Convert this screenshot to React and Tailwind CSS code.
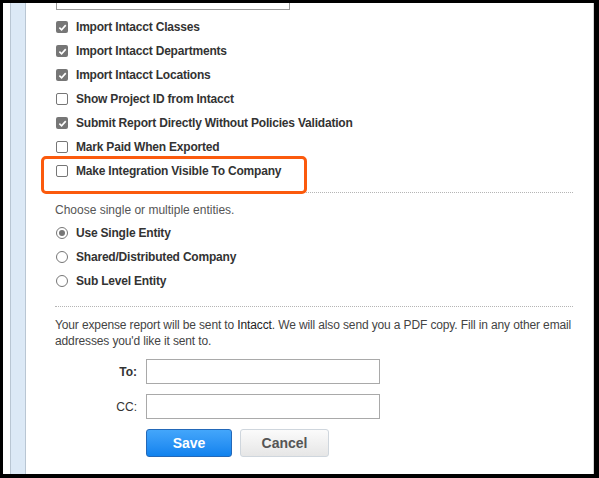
import React from 'react';

const font = { fontFamily: '"Liberation Sans", Arial, sans-serif' };

function Check({ checked }) {
  if (checked) {
    return (
      <span className="flex items-center justify-center w-[12px] h-[12px] rounded-[2px] bg-[#767676]">
        <svg width="9" height="9" viewBox="0 0 10 10">
          <path d="M1.5 5.2 L4 7.6 L8.6 2.4" fill="none" stroke="#fff" strokeWidth="1.8" />
        </svg>
      </span>
    );
  }
  return <span className="block w-[12px] h-[12px] rounded-[2px] border border-[#767676] bg-white" />;
}

function Radio({ checked }) {
  return (
    <span className="flex items-center justify-center w-[12px] h-[12px] rounded-full border border-[#767676] bg-white">
      {checked && <span className="block w-[6px] h-[6px] rounded-full bg-[#767676]" />}
    </span>
  );
}

function Row({ children, control }) {
  return (
    <div className="flex items-center h-[24px] pl-[1px]">
      <span className="w-[20px] shrink-0">{control}</span>
      <span className="text-[12px] font-bold text-[#333] tracking-[-0.2px]">{children}</span>
    </div>
  );
}

const options = [
  ['Import Intacct Classes', true],
  ['Import Intacct Departments', true],
  ['Import Intacct Locations', true],
  ['Show Project ID from Intacct', false],
  ['Submit Report Directly Without Policies Validation', true],
  ['Mark Paid When Exported', false],
];

export default function App() {
  return (
    <div
      style={font}
      className="w-[599px] h-[478px] bg-white border-black border-t-[3px] border-l-[3px] border-r-[5px] border-b-[4px] flex overflow-hidden"
    >
      {/* left rail */}
      <div className="w-[7px] shrink-0 bg-white" />
      <div className="w-[16px] shrink-0 bg-[#dce9f6] border-x border-[#b9c6d3]" />

      {/* content */}
      <div className="flex-1 pl-[29px] pr-[19px] border-r border-[#d4d4d4]">
        <div className="ml-[1px] w-[234px] h-[7px] border-x border-b border-[#9a9a9a]" />

        <div className="mt-[5px]">
          {options.map(([label, checked]) => (
            <Row key={label} control={<Check checked={checked} />}>
              {label}
            </Row>
          ))}
          <div className="relative">
            <Row control={<Check checked={false} />}>Make Integration Visible To Company</Row>
            <div className="absolute -top-[3px] -left-[14px] w-[266px] h-[38px] border-[3px] border-[#fb5a0d] rounded-[5px]" />
          </div>
        </div>

        <div className="mt-[9px] mr-[1px] border-t border-dotted border-[#b5b5b5]" />

        <p className="mt-[9px] text-[12px] leading-[16px] text-[#555]">Choose single or multiple entities.</p>

        <div className="mt-[3px]">
          <Row control={<Radio checked />}>Use Single Entity</Row>
          <Row control={<Radio />}>Shared/Distributed Company</Row>
          <Row control={<Radio />}>Sub Level Entity</Row>
        </div>

        <div className="mt-[13px] mr-[1px] border-t border-dotted border-[#b5b5b5]" />

        <p className="mt-[10px] text-[12px] leading-[16px] text-[#444] tracking-[-0.13px]">
          Your expense report will be sent to <span className="text-[#222]">Intacct</span>. We will also send you a PDF copy. Fill in any other email addresses you'd like it sent to.
        </p>

        <div className="mt-[10px] flex flex-col gap-[10px]">
          <div className="flex items-center">
            <span className="w-[82px] text-right text-[12px] font-bold text-[#333]">To:</span>
            <input className="ml-[9px] w-[234px] h-[25px] border border-[#a9a9a9] bg-white outline-none" />
          </div>
          <div className="flex items-center">
            <span className="w-[82px] text-right text-[12px] text-[#333]">CC:</span>
            <input className="ml-[9px] w-[234px] h-[25px] border border-[#a9a9a9] bg-white outline-none" />
          </div>
          <div className="flex items-center gap-[8px] ml-[91px]">
            <button className="w-[86px] h-[28px] rounded-[3px] border border-[#2368b8] bg-gradient-to-b from-[#43a6fb] to-[#0f82ee] text-white text-[14px] font-bold">
              Save
            </button>
            <button className="w-[89px] h-[28px] rounded-[3px] border border-[#cfd6dd] bg-gradient-to-b from-[#fbfbfb] to-[#e6e6e6] text-[#555] text-[14px] font-bold">
              Cancel
            </button>
          </div>
        </div>
      </div>
    </div>
  );
}
